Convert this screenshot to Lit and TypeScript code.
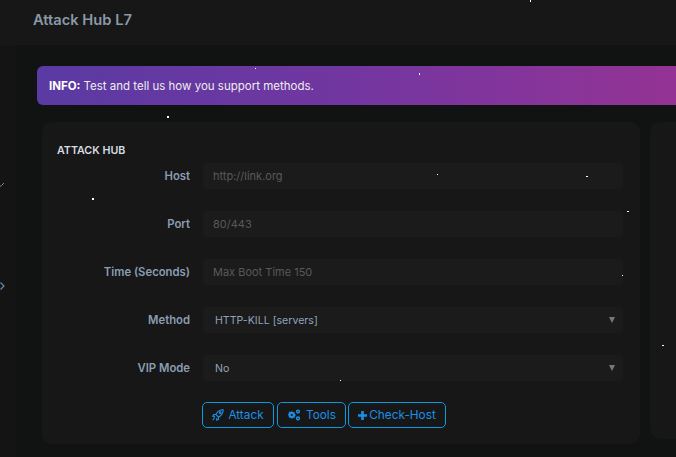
import { LitElement, html, css } from "lit";
import { customElement } from "lit/decorators.js";

const STARS: [number, number, number, number][] = [
  [530, 0, 1, 2], [419, 73, 1, 2], [255, 68, 1, 1], [167, 116, 2, 2], [92, 198, 2, 2],
  [437, 174, 1, 1], [586, 176, 2, 1], [627, 211, 2, 1], [622, 275, 1, 1], [662, 345, 2, 1],
  [340, 380, 1, 1],
];

@customElement("app-root")
export class AppRoot extends LitElement {
  static styles = css`
    :host {
      display: block;
      position: relative;
      width: 676px;
      height: 457px;
      overflow: hidden;
      background: #141414;
      font-family: "Inter", "Noto Sans", sans-serif;
      color: #8fa3b8;
    }
    .shell { display: flex; height: 457px; }
    .rail { width: 16px; flex: none; display: flex; flex-direction: column; padding-top: 182px; gap: 95px; }
    .rail svg { display: block; }
    .main { flex: 1; min-width: 0; display: flex; flex-direction: column; }
    .head {
      height: 45px; flex: none; margin-left: -16px; padding: 11px 0 0 33px; box-sizing: border-box;
      background: #171717; font-size: 14.7px; font-weight: 600; color: #8a99a8; line-height: 18px;
    }
    .body { flex: 1; background: #111212; padding: 21px 0 0 21px; display: flex; flex-direction: column; }
    .alert {
      height: 39px; width: 660px; flex: none; box-sizing: border-box; padding-left: 12px;
      display: flex; align-items: center; border-radius: 6px 0 0 6px; color: #eee; font-size: 11.5px;
      background: linear-gradient(90deg, #5a3aa3 0%, #7436a0 50%, #963394 100%);
    }
    .alert b { font-weight: 700; color: #fff; margin-right: 3px; }
    .cols { display: flex; gap: 10px; margin: 17px 0 0 5px; align-items: flex-start; }
    .card { width: 598px; height: 322px; flex: none; box-sizing: border-box; background: #171717; border-radius: 10px; padding: 22px 17px 0 15px; }
    .side { width: 60px; height: 317px; flex: none; background: #171717; border-radius: 10px 0 0 10px; }
    .title { font-size: 10.7px; font-weight: 600; color: #d5dbe3; line-height: 14px; height: 19px; }
    .rows { display: flex; flex-direction: column; gap: 22px; }
    .row { display: grid; grid-template-columns: 133px 420px; column-gap: 13px; align-items: center; }
    .lab { text-align: right; font-size: 11.3px; font-weight: 600; color: #8a9db2; line-height: 14px; margin-top: -1px; }
    .field {
      height: 26px; border-radius: 3px; background: #1b1b1b; display: flex; align-items: center;
      justify-content: space-between; padding: 0 8px 0 10px; font-size: 11px; color: #565a5e;
    }
    .sel { color: #8fa3b8; padding-left: 12px; font-size: 10.6px; }
    .arrow { width: 0; height: 0; border-left: 3px solid transparent; border-right: 3px solid transparent; border-top: 6px solid #74777f; }
    .btns { display: flex; margin: 21px 0 0 145px; }
    .btn {
      height: 26px; box-sizing: border-box; border: 1px solid #0a9ae0; border-radius: 5px; color: #1b8fe8;
      display: flex; align-items: center; justify-content: center; gap: 4px; font-size: 11.8px;
    }
    .attack { width: 72px; }
    .tools { width: 69px; margin-left: 3px; gap: 5px; }
    .check { width: 98px; margin-left: 2px; gap: 2px; }
    .star { position: absolute; background: #fff; }
  `;

  private star(s: [number, number, number, number]) {
    return html`<i class="star" style="left:${s[0]}px;top:${s[1]}px;width:${s[2]}px;height:${s[3]}px"></i>`;
  }

  render() {
    const row = (l: string, v: string) => html`<div class="row"><div class="lab">${l}</div><div class="field">${v}</div></div>`;
    const sel = (l: string, v: string) => html`<div class="row"><div class="lab">${l}</div><div class="field sel">${v}<span class="arrow"></span></div></div>`;
    return html`
      <div class="shell">
        <div class="rail">
          <svg width="5" height="5" viewBox="0 0 5 5" fill="none" stroke="#6f8fa8"><path d="M0 4.5 L1.5 3.5 L4 1"/></svg>
          <svg width="5" height="8" viewBox="0 0 5 8" fill="none" stroke="#5b8bb8" stroke-width="1.2"><path d="M0.5 0.5 L4 4 L0.5 7.5"/></svg>
        </div>
        <div class="main">
          <div class="head">Attack Hub L7</div>
          <div class="body">
            <div class="alert"><b>INFO:</b> Test and tell us how you support methods.</div>
            <div class="cols">
              <div class="card">
                <div class="title">ATTACK HUB</div>
                <div class="rows">
                  ${row("Host", "http://link.org")}
                  ${row("Port", "80/443")}
                  ${row("Time (Seconds)", "Max Boot Time 150")}
                  ${sel("Method", "HTTP-KILL [servers]")}
                  ${sel("VIP Mode", "No")}
                </div>
                <div class="btns">
                  <div class="btn attack">
                    <svg width="12" height="12" viewBox="0 0 12 12" fill="none" stroke="#1b8fe8" stroke-width="1.1"><path d="M11.2.8C8 .8 5.5 2.3 3.8 5.5L6.5 8.2C9.7 6.5 11.2 4 11.2.8Z"/><path d="M3.8 5.5H1.6L.8 7.2L3 7.4M6.5 8.2V10.4L4.8 11.2L4.6 9M2.6 8.4L.8 11.2"/><circle cx="8.2" cy="3.8" r=".9"/></svg>
                    Attack
                  </div>
                  <div class="btn tools">
                    <svg width="14" height="12" viewBox="0 0 14 12" fill="#1b8fe8" stroke="#1b8fe8"><path fill-rule="evenodd" stroke="none" d="M4 2.4h1.6l.3 1 1-.4 1.1 1.1-.5 1 1 .3v1.6l-1 .3.5 1L6.9 8.9l-1-.5-.3 1H4l-.3-1-1 .5L1.600 7.800l.5-1-1-.3V4.900l1-.3-.5-1L2.700 2.500l1 .5zM4.800 4.900a1.100 1.100 0 1 0 0 2.200 1.100 1.100 0 0 0 0-2.200z"/><circle cx="11" cy="2.600" r="1.400" fill="none" stroke-width="1.500"/><circle cx="11" cy="9.400" r="1.400" fill="none" stroke-width="1.500"/></svg>
                    Tools
                  </div>
                  <div class="btn check">
                    <svg width="9" height="9" viewBox="0 0 9 9" fill="#1b8fe8"><path d="M3.2 0h2.6v3.2H9v2.6H5.8V9H3.2V5.8H0V3.2h3.2z"/></svg>
                    Check-Host
                  </div>
                </div>
              </div>
              <div class="side"></div>
            </div>
          </div>
        </div>
      </div>
      ${STARS.map((s) => this.star(s))}
    `;
  }
}
